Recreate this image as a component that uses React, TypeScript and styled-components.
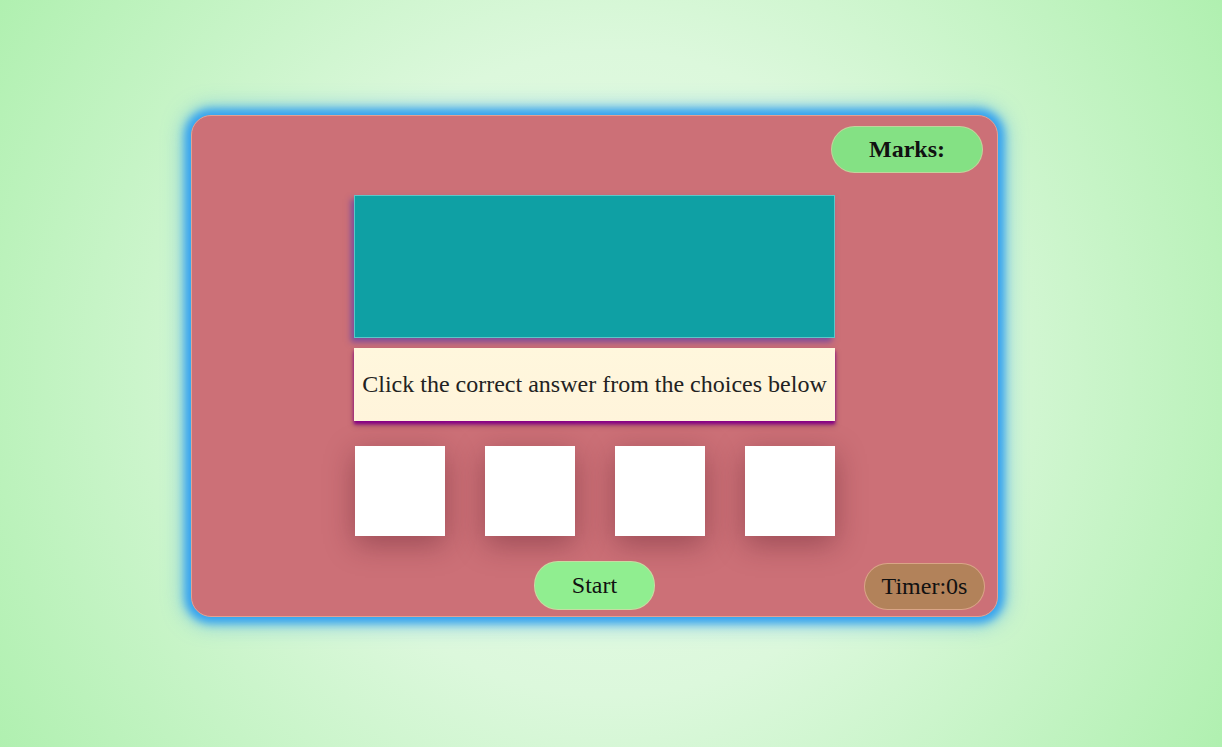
import React from "react";
import styled, { createGlobalStyle } from "styled-components";

const Global = createGlobalStyle`
  html, body { margin: 0; padding: 0; height: 100%; }
  body {
    font-family: "Liberation Serif", "Times New Roman", serif;
    background: radial-gradient(circle at center, #e8fbe8 0%, #dcf8dc 45%, #b0f0b0 100%);
    min-height: 747px;
  }
  #root { min-height: 747px; }
`;

const Page = styled.div`
  width: 1222px;
  height: 747px;
  display: flex;
  justify-content: flex-start;
  padding: 115px 0 0 191px;
  box-sizing: border-box;
`;

const Card = styled.div`
  width: 807px;
  height: 502px;
  box-sizing: border-box;
  background: #cc7077;
  border: 1px solid #e3a091;
  border-radius: 20px;
  box-shadow: 0 0 9px 6px #35a3f0, 0 0 20px 8px rgba(58, 166, 238, 0.55);
  padding: 10px 14px 6px 14px;
  display: flex;
  flex-direction: column;
`;

const Header = styled.div`
  display: flex;
  justify-content: flex-end;
  height: 47px;
`;

const Pill = styled.button<{ $bg: string; $bold?: boolean; $w: number; $h: number }>`
  width: ${(p) => p.$w}px;
  height: ${(p) => p.$h}px;
  border-radius: 24px;
  background: ${(p) => p.$bg};
  border: 1px solid rgba(255, 200, 180, 0.5);
  font-family: "Liberation Serif", "Times New Roman", serif;
  font-size: 24px;
  font-weight: ${(p) => (p.$bold ? 700 : 400)};
  color: #111;
  padding: 0;
  display: flex;
  align-items: center;
  justify-content: center;
`;

const Main = styled.div`
  width: 481px;
  align-self: center;
  display: flex;
  flex-direction: column;
  margin-top: 22px;
`;

const Screen = styled.div`
  height: 143px;
  background: #0fa0a4;
  border: 1px solid #5cc7c8;
  box-sizing: border-box;
  box-shadow: -3px 4px 6px rgba(90, 60, 170, 0.7);
`;

const Prompt = styled.div`
  margin-top: 10px;
  height: 73px;
  background: linear-gradient(#fff7dd, #fff4db);
  display: flex;
  align-items: center;
  justify-content: center;
  font-size: 24px;
  color: #222;
  white-space: nowrap;
  box-shadow: 0 3px 3px #880088, 0 4px 6px rgba(80, 0, 80, 0.4);
`;

const Choices = styled.div`
  margin-top: 25px;
  display: flex;
  justify-content: space-between;
  padding-left: 1px;
`;

const Choice = styled.div`
  width: 90px;
  height: 90px;
  background: #fff;
  box-shadow: 0 8px 28px rgba(80, 20, 35, 0.4);
`;

const Footer = styled.div`
  margin-top: 25px;
  display: grid;
  grid-template-columns: 1fr auto 1fr;
  align-items: center;
`;

const Right = styled.div`
  justify-self: end;
  margin-right: -2px;
  padding-top: 2px;
`;

export default function App() {
  return (
    <>
      <Global />
      <Page>
        <Card>
          <Header>
            <Pill $bg="#84e184" $bold $w={152} $h={47}>Marks:</Pill>
          </Header>
          <Main>
            <Screen />
            <Prompt>Click the correct answer from the choices below</Prompt>
            <Choices>
              <Choice />
              <Choice />
              <Choice />
              <Choice />
            </Choices>
          </Main>
          <Footer>
            <div />
            <Pill $bg="#90ee90" $w={121} $h={49}>Start</Pill>
            <Right>
              <Pill $bg="#b2825a" $w={121} $h={47}>Timer:0s</Pill>
            </Right>
          </Footer>
        </Card>
      </Page>
    </>
  );
}
